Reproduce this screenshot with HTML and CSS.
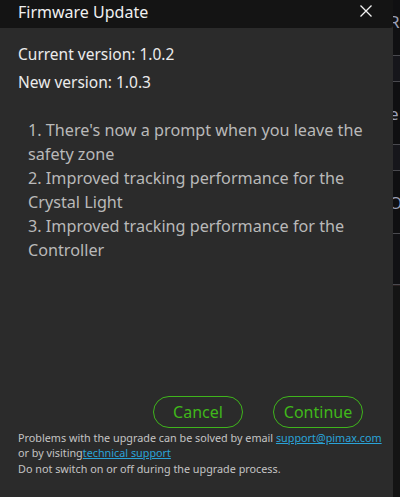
FILE: index.html
```html
<!DOCTYPE html>
<html>
<head>
<meta charset="utf-8">
<link rel="stylesheet" href="styles.css">
</head>
<body>
<div class="page">
  <div class="dialog">
    <div class="titlebar">
      <span class="title">Firmware Update</span>
      <svg class="close" width="12" height="12" viewBox="0 0 12 12"><path d="M0.5 0.5 L11.5 11.5 M11.5 0.5 L0.5 11.5" stroke="#f2f2f2" stroke-width="1.3" fill="none"/></svg>
    </div>
    <div class="content">
      <div class="version">Current version: 1.0.2</div>
      <div class="version">New version: 1.0.3</div>
      <div class="notes">
        <div>1. There's now a prompt when you leave the safety zone</div>
        <div>2. Improved tracking performance for the Crystal Light</div>
        <div>3. Improved tracking performance for the Controller</div>
      </div>
      <div class="spacer"></div>
      <div class="buttons">
        <button class="btn">Cancel</button>
        <button class="btn">Continue</button>
      </div>
      <div class="footer">
        <div>Problems with the upgrade can be solved by email <a class="link">support@pimax.com</a></div>
        <div>or by visiting<a class="link">technical support</a></div>
        <div>Do not switch on or off during the upgrade process.</div>
      </div>
    </div>
  </div>
  <div class="side">
    <div class="side-row first"><span class="glyph">R</span></div>
    <div class="side-row"></div>
    <div class="side-row tall"><span class="glyph">e</span></div>
    <div class="side-row"></div>
    <div class="side-row tall"><span class="glyph">O</span></div>
    <div class="side-row last"></div>
    <div class="side-rest"></div>
  </div>
</div>
</body>
</html>
```
FILE: styles.css
```css
html, body {
  margin: 0;
  padding: 0;
  background: #0f0f10;
}
.page {
  width: 400px;
  height: 497px;
  display: flex;
  overflow: hidden;
  font-family: "Noto Sans", "Open Sans", sans-serif;
}
.dialog {
  width: 393px;
  height: 497px;
  background: #2b2b2b;
  display: flex;
  flex-direction: column;
  flex-shrink: 0;
}
.titlebar {
  height: 28px;
  background: #141414;
  display: flex;
  align-items: center;
  justify-content: space-between;
  padding: 0 21px 0 18px;
  border-bottom-right-radius: 3px;
}
.title {
  color: #f0f0f0;
  font-size: 16px;
  margin-top: -5px;
}
.close {
  margin-top: -6px;
}
.content {
  flex: 1;
  display: flex;
  flex-direction: column;
  padding: 12px 0 0 18px;
}
.version {
  color: #ececec;
  font-size: 15.5px;
  line-height: 28px;
}
.notes {
  margin-top: 22px;
  padding-left: 10px;
  color: #b9b9b9;
  font-size: 16.2px;
  line-height: 24px;
  width: 345px;
}
.spacer {
  flex: 1;
}
.buttons {
  display: flex;
  justify-content: flex-end;
  gap: 30px;
  padding-right: 30px;
}
.btn {
  width: 90px;
  height: 32px;
  border: 1.5px solid #3fb51c;
  border-radius: 16px;
  background: transparent;
  color: #40b81a;
  font-family: "Noto Sans", "Open Sans", sans-serif;
  font-size: 16px;
  padding: 0;
}
.footer {
  margin-top: 2px;
  color: #c4c4c4;
  font-size: 10.8px;
  line-height: 15.5px;
  padding-bottom: 21px;
}
.link {
  color: #2aa3d8;
  text-decoration: underline;
}
.side {
  flex: 1;
  display: flex;
  flex-direction: column;
  background: #0f0f10;
}
.side-row {
  height: 25px;
  border-bottom: 1px solid #4a4a4f;
  background: #16161b;
  color: #9aa0b8;
  font-size: 17px;
  overflow: hidden;
  white-space: nowrap;
}
.side-row.first {
  height: 55px;
  background: #101012;
}
.side-row.tall {
  height: 62px;
  background: #0f0f11;
}
.side-row.last {
  height: 50px;
  background: #111114;
}
.glyph {
  display: inline-block;
  margin-left: -4px;
}
.side-row.first .glyph { margin-top: 10px; }
.side-row.tall .glyph { margin-top: 20px; }
.side-rest {
  flex: 1;
  background: #141414;
  border-top: 1px solid #2a2020;
}
```
